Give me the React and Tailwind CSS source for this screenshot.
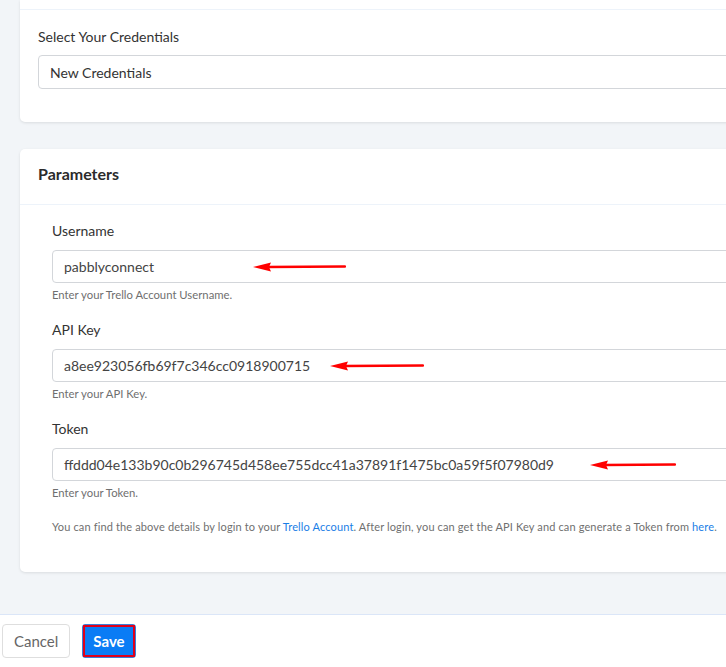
import React from "react";

function Arrow({ left, width }) {
  return (
    <svg
      className="absolute top-1/2 -translate-y-1/2"
      style={{ left }}
      width={width}
      height="12"
      viewBox={`0 0 ${width} 12`}
    >
      <line x1="14" y1="6" x2={width - 1} y2="5.5" stroke="#f00" strokeWidth="2.5" strokeLinecap="round" />
      <polygon points="0,6 18,1.5 16,6 18,10.5" fill="#f00" />
    </svg>
  );
}

function Field({ label, value, help, arrowLeft, arrowWidth, mt }) {
  return (
    <div className={mt}>
      <div className="text-[14px] leading-[20px] text-[#333]">{label}</div>
      <div className="relative mt-[9px] h-[33px] rounded-[4px] border border-[#d3d6da] bg-white pl-[11px] flex items-center text-[14px] text-[#444]">
        {value}
        <Arrow left={arrowLeft} width={arrowWidth} />
      </div>
      <div className="mt-[4px] text-[11.3px] leading-[16px] text-[#6f6f6f]">{help}</div>
    </div>
  );
}

export default function App() {
  return (
    <div
      className="w-[726px] h-[667px] overflow-hidden bg-[#f2f5f8]"
      style={{ fontFamily: "Lato, 'Noto Sans', sans-serif" }}
    >
      <div className="w-[780px]">
        <div className="pl-[20px] pb-[27px]">
          <div className="rounded-b-[5px] bg-white shadow-[0_1px_3px_rgba(0,0,0,0.10)]">
            <div className="h-[10px] border-b border-[#edf3fa]" />
            <div className="pl-[18px] pt-[17px] pb-[33px]">
              <div className="text-[14px] leading-[20px] text-[#333]">Select Your Credentials</div>
              <div className="mt-[8px] h-[34px] rounded-[4px] border border-[#d3d6da] pl-[11px] flex items-center text-[14px] text-[#333]">
                New Credentials
              </div>
            </div>
          </div>
        </div>
        <div className="pl-[20px] pb-[42px]">
          <div className="rounded-[5px] bg-white shadow-[0_1px_3px_rgba(0,0,0,0.10)]">
            <div className="h-[56px] border-b border-[#edf3fa] pl-[18px] pt-[13px]">
              <div className="text-[16px] leading-[24px] font-bold text-[#2b2b2b]">Parameters</div>
            </div>
            <div className="pl-[32px] pt-[16px] pb-[37px]">
              <Field
                label="Username"
                value="pabblyconnect"
                help="Enter your Trello Account Username."
                arrowLeft={200}
                arrowWidth={93}
              />
              <Field
                mt="mt-[17px]"
                label="API Key"
                value="a8ee923056fb69f7c346cc0918900715"
                help="Enter your API Key."
                arrowLeft={277}
                arrowWidth={94}
              />
              <Field
                mt="mt-[17px]"
                label="Token"
                value="ffddd04e133b90c0b296745d458ee755dcc41a37891f1475bc0a59f5f07980d9"
                help="Enter your Token."
                arrowLeft={537}
                arrowWidth={86}
              />
              <div className="mt-[18px] text-[11px] leading-[16px] tracking-[0.14px] text-[#6f6f6f] whitespace-nowrap">
                You can find the above details by login to your{" "}
                <span className="text-[#1a7ee6]">Trello Account</span>. After login, you can get the API Key and can
                generate a Token from <span className="text-[#1a7ee6]">here</span>.
              </div>
            </div>
          </div>
        </div>
        <div className="border-t border-[#dbe6f8] bg-white h-[60px] flex items-start pt-[9px] pl-[2px] gap-[12px]">
          <button className="h-[34px] px-[11px] rounded-[4px] border border-[#dedede] bg-white text-[15px] text-[#666]">
            Cancel
          </button>
          <div className="rounded-[3px] border border-[#3b7fd6]">
            <button className="h-[32px] px-[8px] border-2 border-[#e0001b] bg-[#0a7cf5] text-[15px] font-bold text-white">
              Save
            </button>
          </div>
        </div>
      </div>
    </div>
  );
}
